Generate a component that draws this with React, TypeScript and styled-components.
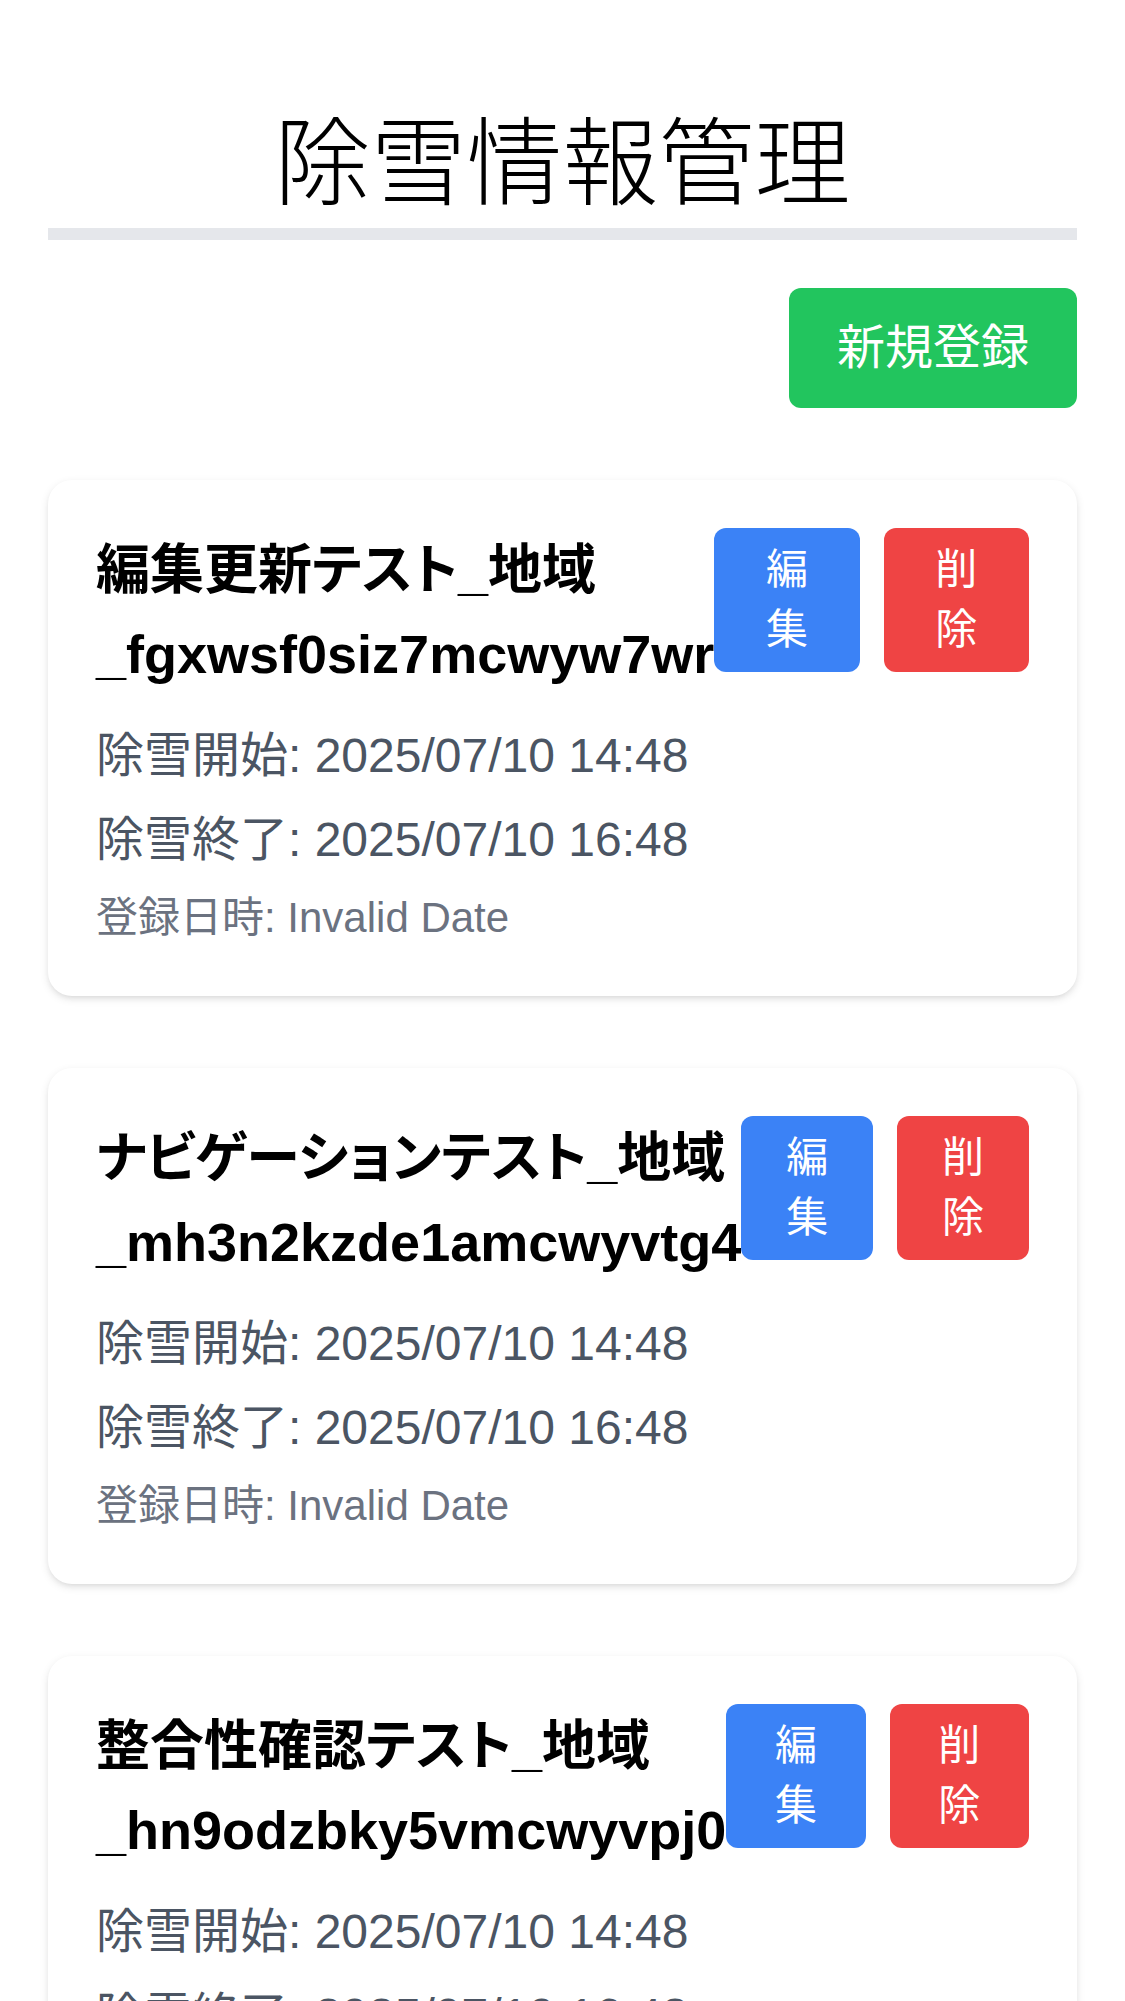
import React from "react";
import styled, { createGlobalStyle } from "styled-components";

const GlobalStyle = createGlobalStyle`
  html, body {
    margin: 0;
    padding: 0;
    background: #ffffff;
  }
  body {
    font-family: "Liberation Sans", "Noto Sans CJK JP", sans-serif;
    color: #000000;
  }
  * { box-sizing: border-box; }
`;

const Page = styled.div`
  padding: 48px;
`;

const Title = styled.h1`
  margin: 36px 0 0;
  height: 144px;
  font-size: 96px;
  line-height: 144px;
  font-weight: 300;
  text-align: center;
  color: #000000;
  font-family: "Noto Sans CJK JP", sans-serif;
  border-bottom: 12px solid #e5e7eb;
  box-sizing: content-box;
`;

const Toolbar = styled.div`
  display: flex;
  justify-content: flex-end;
  margin-top: 48px;
  margin-bottom: 72px;
`;

const Button = styled.button<{ $color: string; $big?: boolean }>`
  border: none;
  cursor: pointer;
  color: #ffffff;
  background: ${(p) => p.$color};
  font-family: "Liberation Sans", "Noto Sans CJK JP", sans-serif;
  border-radius: 12px;
  padding: ${(p) => (p.$big ? "24px 48px" : "12px 36px")};
  font-size: ${(p) => (p.$big ? "48px" : "42px")};
  line-height: ${(p) => (p.$big ? "72px" : "60px")};
`;

const List = styled.div`
  display: flex;
  flex-direction: column;
  gap: 72px;
`;

const Card = styled.div`
  background: #ffffff;
  border-radius: 24px;
  padding: 48px;
  box-shadow: 0 3px 9px 0 rgba(0, 0, 0, 0.1), 0 3px 6px -3px rgba(0, 0, 0, 0.1);
`;

const CardHeader = styled.div`
  display: flex;
  justify-content: space-between;
  align-items: flex-start;
  margin-bottom: 24px;
`;

const CardTitle = styled.h3`
  flex: 1;
  margin: 0;
  font-size: 54px;
  line-height: 84px;
  font-weight: 700;
  color: #000000;
  font-feature-settings: "palt";
`;

const Actions = styled.div`
  display: flex;
  gap: 24px;
`;

const Info = styled.p<{ $small?: boolean }>`
  margin: 0;
  color: ${(p) => (p.$small ? "#6b7280" : "#4b5563")};
  font-size: ${(p) => (p.$small ? "42px" : "48px")};
  line-height: ${(p) => (p.$small ? "60px" : "72px")};
  & + & {
    margin-top: 12px;
  }
`;

const items = [
  { name: "編集更新テスト_地域_fgxwsf0siz7mcwyw7wr" },
  { name: "ナビゲーションテスト_地域_mh3n2kzde1amcwyvtg4" },
  { name: "整合性確認テスト_地域_hn9odzbky5vmcwyvpj0" },
];

export default function App() {
  return (
    <>
      <GlobalStyle />
      <Page>
        <Title>除雪情報管理</Title>
        <Toolbar>
          <Button $color="#22c55e" $big>
            新規登録
          </Button>
        </Toolbar>
        <List>
          {items.map((it) => (
            <Card key={it.name}>
              <CardHeader>
                <CardTitle>{it.name}</CardTitle>
                <Actions>
                  <Button $color="#3b82f6">編集</Button>
                  <Button $color="#ef4444">削除</Button>
                </Actions>
              </CardHeader>
              <Info>除雪開始: 2025/07/10 14:48</Info>
              <Info>除雪終了: 2025/07/10 16:48</Info>
              <Info $small>登録日時: Invalid Date</Info>
            </Card>
          ))}
        </List>
      </Page>
    </>
  );
}
